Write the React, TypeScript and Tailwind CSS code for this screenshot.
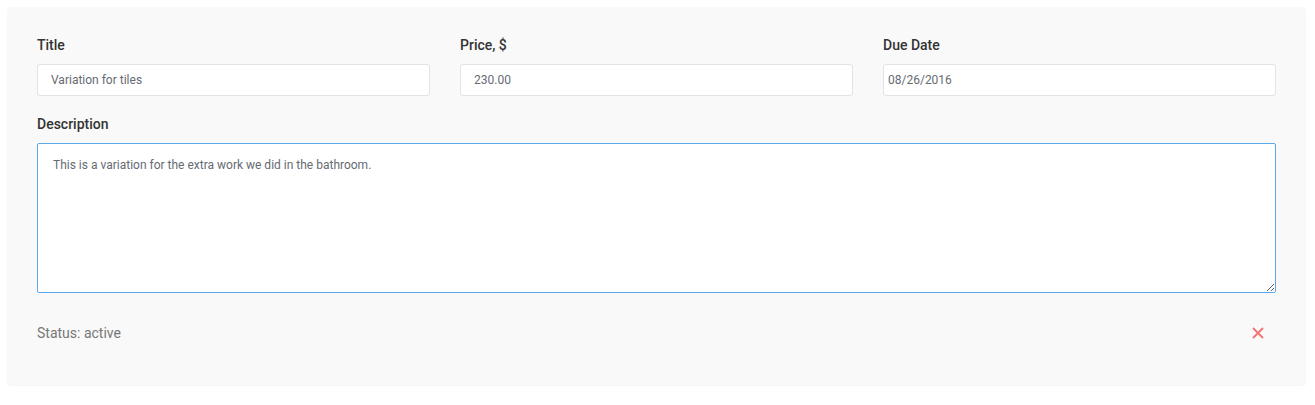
export default function App() {
    return (
        <div className="min-h-[405px] bg-white p-[7px] pr-[9px] font-['Roboto',sans-serif]">
            <div className="rounded bg-[#f9f9f9] px-[30px] pt-[28px] pb-[42px] shadow-[0_1px_1px_rgba(0,0,0,0.04)]">
                {/* Top row */}
                <div className="grid grid-cols-3 gap-[30px]">
                    <div>
                        <label className="block text-[14px] font-medium leading-[20px] text-[#333]">Title</label>
                        <input
                            readOnly
                            value="Variation for tiles"
                            className="mt-[9px] block h-[32px] w-full rounded-[3px] border border-[#dfe4e8] bg-white px-[13px] text-[12px] text-[#666b73] outline-none"
                        />
                    </div>
                    <div>
                        <label className="block text-[14px] font-medium leading-[20px] text-[#333]">Price, $</label>
                        <input
                            readOnly
                            value="230.00"
                            className="mt-[9px] block h-[32px] w-full rounded-[3px] border border-[#dfe4e8] bg-white px-[13px] text-[12px] text-[#666b73] outline-none"
                        />
                    </div>
                    <div>
                        <label className="block text-[14px] font-medium leading-[20px] text-[#333]">Due Date</label>
                        <input
                            readOnly
                            value="08/26/2016"
                            className="mt-[9px] block h-[32px] w-full rounded-[3px] border border-[#dfe4e8] bg-white px-[4px] text-[12px] text-[#666b73] outline-none"
                        />
                    </div>
                </div>

                {/* Description */}
                <label className="mt-[18px] block text-[14px] font-medium leading-[20px] text-[#333]">Description</label>
                <textarea
                    readOnly
                    value="This is a variation for the extra work we did in the bathroom."
                    className="mt-[9px] block h-[150px] w-full resize-y rounded-[2px] border border-[#5aa9ea] bg-white px-[15px] py-[13px] text-[12px] leading-[16px] text-[#666b73] outline-none"
                />

                {/* Footer */}
                <div className="mt-[30px] flex items-center justify-between">
                    <span className="text-[14px] leading-[20px] text-[#777]">Status: active</span>
                    <button className="mr-[11px] flex h-[14px] w-[14px] items-center justify-center">
                        <svg width="12" height="12" viewBox="0 0 12 12" fill="none">
                            <path d="M1 1L11 11M11 1L1 11" stroke="#f47373" strokeWidth="1.8" />
                        </svg>
                    </button>
                </div>
            </div>
        </div>
    );
}
